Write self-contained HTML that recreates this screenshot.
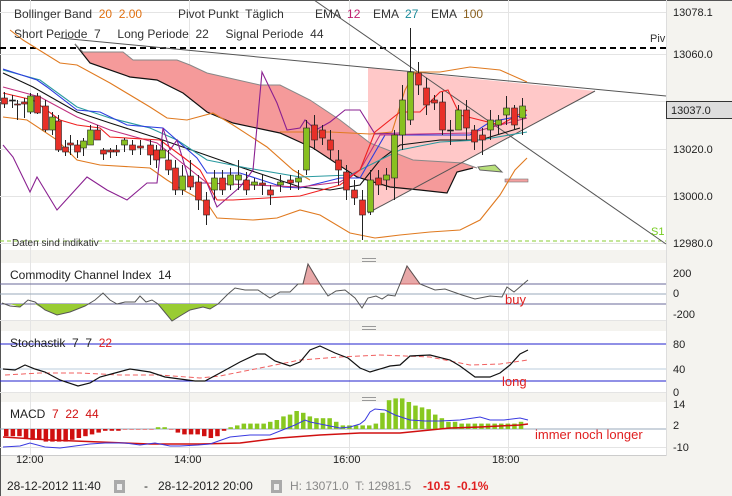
<!DOCTYPE html>
<html><head><meta charset="utf-8"><style>
body{margin:0;width:732px;height:496px;background:#f4f3ef;overflow:hidden;font-family:"Liberation Sans",sans-serif}
svg{position:absolute;left:0;top:0}
text{font-family:"Liberation Sans",sans-serif;white-space:pre}
</style></head><body>
<svg width="732" height="496" viewBox="0 0 732 496" xml:space="preserve">
<rect x="0" y="0" width="732" height="496" fill="#f4f3ef"/>
<rect x="0" y="0" width="666" height="456" fill="#fff"/>
<line x1="0" y1="0.5" x2="732" y2="0.5" stroke="#555"/>
<line x1="0.5" y1="0" x2="0.5" y2="496" stroke="#555"/>
<line x1="666.5" y1="0" x2="666.5" y2="456" stroke="#ddd"/>
<rect x="1" y="250" width="665" height="13" fill="#f4f3ef"/>
<rect x="1" y="321" width="665" height="10" fill="#f4f3ef"/>
<rect x="1" y="393" width="665" height="9" fill="#f4f3ef"/>
<rect x="1" y="455" width="665" height="1" fill="#ccc"/>
<g stroke="#999" stroke-width="1"><line x1="362" y1="258.5" x2="376" y2="258.5"/><line x1="362" y1="261.5" x2="376" y2="261.5"/>
<line x1="362" y1="326.5" x2="376" y2="326.5"/><line x1="362" y1="329.5" x2="376" y2="329.5"/>
<line x1="362" y1="397.5" x2="376" y2="397.5"/><line x1="362" y1="400.5" x2="376" y2="400.5"/></g>
<g stroke="#e4e4e4" stroke-width="1">
<line x1="0" y1="12.5" x2="666" y2="12.5"/><line x1="0" y1="54.5" x2="666" y2="54.5"/><line x1="0" y1="101.5" x2="666" y2="101.5"/><line x1="0" y1="149.5" x2="666" y2="149.5"/><line x1="0" y1="196.5" x2="666" y2="196.5"/><line x1="0" y1="243.5" x2="666" y2="243.5"/>
<line x1="30.5" y1="0" x2="30.5" y2="456"/><line x1="189.5" y1="0" x2="189.5" y2="456"/><line x1="349.5" y1="0" x2="349.5" y2="456"/><line x1="508.5" y1="0" x2="508.5" y2="456"/>
<line x1="0" y1="320.5" x2="666" y2="320.5"/><line x1="0" y1="392.5" x2="666" y2="392.5"/><line x1="0" y1="447.5" x2="666" y2="447.5"/>
</g>
<polygon points="368,68 595,91 368,213" fill="#ffc8c8"/>
<polygon points="75,44 83,52 123,52 133,60 177,60 190,65 207,73 260,85 280,85 310,100 340,120 370,143 413,160 463,163 477,168 473,168 457,172 447,193 420,190 390,187 357,177 313,148 280,133 233,123 207,112 183,93 157,80 130,77 90,63" fill="#f59a9a"/>
<polyline points="75,44 90,63 130,77 157,80 183,93 207,112 233,123 280,133 313,148 357,177 390,187 420,190 447,193 457,172 473,168" fill="none" stroke="#111" stroke-width="1.2"/>
<polyline points="75,44 83,52 123,52 133,60 177,60 190,65 207,73 260,85 280,85 310,100 340,120 370,143 413,160 463,163 477,168" fill="none" stroke="#888"/>
<polygon points="478,167 495,165 502,172 480,170" fill="#b8e07a" stroke="#666"/>
<rect x="505" y="179" width="23" height="3" fill="#f5a0a0" stroke="#777" stroke-width=".6"/>
<line x1="0" y1="48" x2="666" y2="48" stroke="#000" stroke-width="2" stroke-dasharray="6,4"/>
<line x1="0" y1="241" x2="666" y2="241" stroke="#8c3" stroke-width="1" stroke-dasharray="4,3"/>
<line x1="60" y1="38" x2="666" y2="96" stroke="#555"/>
<line x1="314" y1="0" x2="666" y2="244" stroke="#555"/>
<line x1="368" y1="213" x2="595" y2="91" stroke="#555"/>
<g fill="none" stroke-width="1.1">
<polyline stroke="#e07a20" points="10,30 23,40 60,63 77,65 110,83 150,107 167,118 187,120 213,113 233,125 267,147 293,170 310,180"/>
<polyline stroke="#e07a20" points="280,132 330,132 370,134 392,132 405,90 415,72 440,72 470,67 500,70 527,82"/>
<polyline stroke="#e07a20" points="3,117 27,120 57,140 77,160 100,165 150,168 167,180 183,190 207,203 217,218 253,220 277,218 300,210 320,215 350,233 375,238 400,235 430,232 460,230 480,220 500,195 515,170 527,158"/>
<polyline stroke="#111" points="3,73 33,87 77,112 110,123 157,138 200,153 240,167 300,187 330,190 360,185 380,160 400,145 440,140 480,140 520,128"/>
<polyline stroke="#2a9aa0" points="3,70 40,80 77,107 110,118 150,128 177,140 207,160 247,168 300,177 350,175 400,150 440,142 480,140 527,132"/>
<polyline stroke="#2c3ce0" points="3,69 37,80 47,87 77,110 100,112 127,125 163,128 197,158 207,173 240,173 283,187 300,188 340,178 360,178 385,135 420,135 470,135 490,122 510,118 527,115"/>
<polyline stroke="#c0307f" points="3,87 40,97 77,117 110,130 157,143 207,183 300,187 340,182 360,170 380,135 420,134 470,133 500,125 527,118"/>
<polyline stroke="#8a2090" points="3,145 13,157 30,192 37,177 57,210 87,177 107,190 127,200 147,183 157,183 163,128 170,150 177,140 190,183 207,183 217,207 240,187 253,170 262,72 277,103 287,130 300,128 305,120 316,130 330,122 345,110 360,110 375,134 400,133"/>
<polyline stroke="#f02020" points="3,93 33,100 60,120 77,125 100,128 110,137 160,140 183,157 200,170 217,200 233,200 300,196 340,185 360,170 375,132 400,112 420,112 440,92 448,90 460,115 480,120 500,125 527,110"/>
</g>
<g id="c"></g>
<g font-size="12" fill="#333">
<text x="14" y="18">Bollinger Band  <tspan fill="#e07010">20  2.00</tspan></text>
<text x="178" y="18">Pivot Punkt  Täglich</text>
<text x="315" y="18">EMA  <tspan fill="#c0206f">12</tspan></text>
<text x="373" y="18">EMA  <tspan fill="#1a8a9a">27</tspan></text>
<text x="431" y="18">EMA  <tspan fill="#8a6020">100</tspan></text>
<text x="14" y="38">Short Periode  7     Long Periode  22     Signal Periode  44</text>
<text x="650" y="42" font-size="11">Piv</text>
<text x="651" y="235" font-size="11" fill="#7c2">S1</text>
<text x="12" y="246" font-size="10">Daten sind indikativ</text>
</g>
<g font-size="11" fill="#222">
<text x="673" y="16">13078.1</text><text x="673" y="58">13060.0</text><text x="673" y="153">13020.0</text><text x="673" y="200">13000.0</text><text x="673" y="247">12980.0</text>
<text x="673" y="277">200</text><text x="673" y="297">0</text><text x="673" y="318">-200</text>
<text x="673" y="348">80</text><text x="673" y="373">40</text><text x="673" y="396">0</text>
<text x="673" y="408">14</text><text x="673" y="429">2</text><text x="673" y="451">-10</text>
</g>
<rect x="666.5" y="101.5" width="66" height="17" fill="#ddd" stroke="#333"/>
<text x="671" y="114" font-size="11" fill="#222">13037.0</text>
<line x1="0" y1="284" x2="666" y2="284" stroke="#6a6a9a"/><line x1="0" y1="294" x2="666" y2="294" stroke="#9ab"/><line x1="0" y1="304" x2="666" y2="304" stroke="#6a6a9a"/>
<polygon points="10,304 20,307 25,304" fill="#9c3"/>
<polygon points="35,304 45,310 57,315 70,312 85,306 88,304" fill="#9c3"/>
<polygon points="158,304 172,321 180,316 190,310 203,307 210,309 218,304" fill="#9c3"/>
<polygon points="303,284 308,264 320,284" fill="#e8a8a8" stroke="#c66"/>
<polygon points="400,284 407,266 420,284" fill="#e8a8a8" stroke="#c66"/>
<polyline fill="none" stroke="#555" points="2,303 10,306 20,307 28,300 35,302 45,310 57,315 70,312 85,306 95,300 103,293 110,300 117,304 125,302 135,302 140,296 146,302 152,300 158,304 172,321 180,316 190,310 203,307 210,309 218,304 228,294 235,288 245,290 258,290 270,298 280,292 290,292 298,284 303,284 308,264 320,284 328,296 336,291 345,290 355,298 362,308 368,298 376,296 382,299 388,295 395,296 400,284 407,266 420,284 435,290 445,289 462,295 475,299 490,296 502,297 507,287 514,292 528,280"/>
<text x="10" y="279" font-size="12" fill="#222">Commodity Channel Index  14</text>
<text x="505" y="304" font-size="13" fill="#e02020">buy</text>
<line x1="0" y1="344" x2="666" y2="344" stroke="#22c"/><line x1="0" y1="381" x2="666" y2="381" stroke="#22c"/><line x1="0" y1="369" x2="666" y2="369" stroke="#bcd"/>
<polyline fill="none" stroke="#f06060" stroke-dasharray="5,3" points="5,375 40,373 80,373 120,375 160,375 200,378 220,376 260,368 300,360 340,357 380,355 430,357 470,365 500,364 528,360"/>
<polyline fill="none" stroke="#111" stroke-width="1.2" points="3,369 15,370 25,365 35,369 45,372 60,380 78,386 90,383 100,377 115,373 130,369 150,372 165,377 180,379 195,381 205,381 220,373 240,362 257,354 265,354 275,361 290,366 300,362 310,350 320,346 335,353 348,358 360,368 370,372 390,366 400,365 410,356 430,355 450,360 460,366 475,377 490,377 500,373 510,365 520,354 528,350"/>
<text x="10" y="347" font-size="12" fill="#222">Stochastik  7  7  <tspan fill="#e02020">22</tspan></text>
<text x="502" y="386" font-size="13" fill="#e02020">long</text>
<line x1="0" y1="429" x2="666" y2="429" stroke="#9ab"/>
<g id="m"></g>
<polyline fill="none" stroke="#d01010" stroke-width="1.5" points="3,437 50,440 100,442 150,444 200,444 240,443 280,438 320,435 360,433 400,433 430,430 450,428 480,427 520,425 528,424"/>
<polyline fill="none" stroke="#3a3ae0" points="3,447 20,446 30,443 45,447 60,448 75,446 90,444 105,443 125,443 140,445 155,443 170,446 180,446 198,445 210,444 230,437 250,435 270,435 295,425 305,420 310,422 320,424 330,426 340,428 350,427 360,424 365,420 370,412 375,409 385,410 395,415 410,420 425,421 440,421 460,420 480,417 490,420 504,420 520,418 528,420"/>
<text x="10" y="418" font-size="12" fill="#222">MACD  <tspan fill="#d01010">7  22  44</tspan></text>
<text x="535" y="439" font-size="13" fill="#e02020">immer noch longer</text>
<g font-size="11" fill="#222"><text x="16" y="463">12:00</text><text x="174" y="463">14:00</text><text x="333" y="463">16:00</text><text x="492" y="463">18:00</text></g>
<g font-size="12">
<text x="7" y="490" fill="#222">28-12-2012 11:40</text>
<rect x="114" y="480" width="11" height="13" fill="#aaa"/><rect x="117" y="484" width="5" height="6" fill="#eee"/>
<text x="144" y="490" fill="#222">-</text>
<text x="158" y="490" fill="#222">28-12-2012 20:00</text>
<rect x="271" y="480" width="11" height="13" fill="#aaa"/><rect x="274" y="484" width="5" height="6" fill="#eee"/>
<text x="290" y="490" fill="#888">H: 13071.0  T: 12981.5</text>
<text x="423" y="490" fill="#e02020" font-weight="bold">-10.5  -0.1%</text>
</g>
</svg>
<script>
var C=[[4,98,104,92,108],[12,100,100,95,108],[17,104,105,100,120],[24,102,104,98,118],[30,112,96,93,114],[37,96,113,93,114],[45,106,130,100,132],[52,130,117,112,135],[58,121,150,115,152],[65,147,152,140,156],[70,143,145,135,155],[77,145,152,140,158],[83,148,141,138,156],[90,145,130,125,145],[97,130,140,125,140],[103,150,154,148,160],[110,150,152,148,158],[116,150,152,145,156],[124,145,140,138,152],[132,145,150,140,155],[140,146,148,140,155],[150,145,155,140,165],[156,150,160,145,168],[162,158,150,140,158],[168,160,170,150,175],[175,168,190,160,195],[182,190,176,165,195],[190,176,187,160,190],[198,182,200,175,210],[206,200,215,192,225],[214,190,178,170,200],[222,178,190,170,195],[230,185,175,168,190],[238,180,175,160,190],[246,180,190,172,195],[254,185,182,178,190],[262,183,185,175,195],[270,190,195,185,205],[280,185,182,175,192],[290,180,183,175,190],[298,182,178,170,190],[306,170,128,120,175],[314,125,140,115,150],[322,130,138,125,145],[330,140,150,130,160],[338,160,170,150,185],[346,172,190,165,200],[354,190,198,180,205],[362,200,215,190,240],[370,212,180,170,215],[378,178,185,170,195],[386,180,175,168,190],[394,178,135,130,200],[402,135,100,85,150],[410,120,72,28,125],[418,73,85,62,95],[426,88,105,78,115],[434,100,103,95,110],[442,102,130,92,135],[450,130,130,120,145],[458,130,110,105,128],[466,110,128,100,140],[474,130,142,125,150],[482,135,140,128,155],[490,130,120,110,140],[498,125,120,115,135],[506,115,108,96,125],[514,108,125,105,130],[522,118,106,98,135]];
var h='';C.forEach(function(c){var x=c[0],o=c[1],cl=c[2],t=Math.min(o,cl),b=Math.max(o,cl);var col=cl<o?'#88c020':(cl>o?'#e83028':'#222');
h+='<line x1="'+(x+.5)+'" y1="'+c[3]+'" x2="'+(x+.5)+'" y2="'+c[4]+'" stroke="#222"/>';
h+='<rect x="'+(x-2.5)+'" y="'+t+'" width="6" height="'+Math.max(1,b-t)+'" fill="'+col+'" stroke="#222" stroke-width=".6"/>';});
document.getElementById('c').innerHTML=h;
var M=[-4,-4,-4,-5,-6,-6,-7,-7,-7,-7,-6,-5,-4,-3,-2,-1,-1,-1,0,0,0,0,0,1,1,0,-2,-3,-3,-3,-4,-5,-4,-1,1,2,3,3,3,3,4,5,7,8,10,9,7,6,6,6,4,2,2,2,2,2,3,9,16,17,17,15,13,12,11,8,6,4,4,3,3,3,3,3,3,3,3,3,4];
var m='';M.forEach(function(v,i){var x=4+i*6.6;var y0=429;var hh=v*1.8;m+='<rect x="'+x+'" y="'+(v>0?y0-hh:y0)+'" width="4.5" height="'+Math.abs(hh||0.5)+'" fill="'+(v>0?'#88c820':'#d01010')+'"/>';});
document.getElementById('m').innerHTML=m;
</script>
</body></html>
